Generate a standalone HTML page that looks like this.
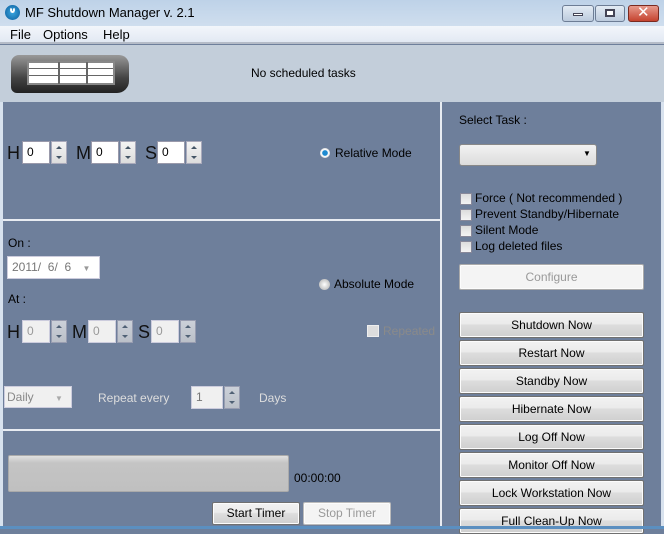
<!DOCTYPE html>
<html><head><style>
*{margin:0;padding:0;box-sizing:border-box}
body{width:664px;height:529px;overflow:hidden;font-family:"Liberation Sans","DejaVu Sans",sans-serif;font-size:12px;background:#6e7f9b;position:relative}
.a{position:absolute}
.t{position:absolute;white-space:nowrap}
.btn{position:absolute;left:459px;width:185px;height:26px;border:1px solid #707070;border-radius:2px;background:linear-gradient(#f2f2f2,#ebebeb 45%,#dddddd 50%,#cfcfcf);box-shadow:inset 0 0 0 1px #fcfcfc;text-align:center;line-height:24px;font-size:12px;color:#000}
.box{position:absolute;background:#fff;border:1px solid #aab;height:23px;font-size:12px;padding:3px 0 0 4px}
.dis{background:#f0f0f0;color:#999;border-color:#ccd}
.spin{position:absolute;width:16px;height:23px;border:1px solid #aab;background:linear-gradient(#f4f4f4,#dcdcdc)}
.spin:before{content:"";position:absolute;left:4px;top:4px;border:3px solid transparent;border-bottom:3px solid #456;border-top:0}
.spin:after{content:"";position:absolute;left:4px;bottom:4px;border:3px solid transparent;border-top:3px solid #456;border-bottom:0}
.big{font-size:18px;color:#111}
.cb{position:absolute;width:12px;height:12px;border:1px solid #889;background:linear-gradient(#ddd,#f4f4f4)}
</style></head><body>
<div class="a" style="left:0;top:0;width:664px;height:26px;background:linear-gradient(#bed2e8,#cfdeee)"></div>
<div class="a" style="left:5px;top:5px;width:15px;height:15px;border-radius:50%;background:radial-gradient(#39a7e0,#0b5c9c);"></div>
<div class="a" style="left:10px;top:7px;width:5px;height:6px;border:2px solid #fff;border-top-color:transparent;border-radius:50%"></div>
<div class="t" style="left:25px;top:5px;font-size:13px;color:#000">MF Shutdown Manager v. 2.1</div>
<div class="a" style="left:562px;top:5px;width:32px;height:17px;border:1px solid #6d7d95;border-radius:3px;background:linear-gradient(#e3ebf4,#bccbdd)"></div>
<div class="a" style="left:573px;top:13px;width:10px;height:3px;background:#fff;border:1px solid #445"></div>
<div class="a" style="left:595px;top:5px;width:30px;height:17px;border:1px solid #6d7d95;border-radius:3px;background:linear-gradient(#e3ebf4,#bccbdd)"></div>
<div class="a" style="left:605px;top:9px;width:10px;height:8px;border:2px solid #445;background:#fff"></div>
<div class="a" style="left:628px;top:5px;width:31px;height:17px;border:1px solid #7a2a20;border-radius:3px;background:linear-gradient(#e79a8c,#c5432f)"></div>
<div class="t" style="left:637px;top:3px;font-size:15px;font-weight:bold;color:#fff">✕</div>
<div class="a" style="left:0;top:26px;width:664px;height:18px;background:linear-gradient(#f3f6fb,#e2e9f3);border-bottom:2px solid #b5bcc8"></div>
<div class="t" style="left:10px;top:27px;font-size:13px">File</div>
<div class="t" style="left:43px;top:27px;font-size:13px">Options</div>
<div class="t" style="left:103px;top:27px;font-size:13px">Help</div>
<div class="a" style="left:0;top:45px;width:664px;height:57px;background:#c3ceda"></div>
<div class="a" style="left:11px;top:55px;width:118px;height:38px;border-radius:8px 10px 12px 6px;background:linear-gradient(#999,#444 60%,#222);"></div>
<div class="a" style="left:27px;top:61px;width:88px;height:24px;background:#fff;border:2px solid #888"></div>
<div class="a" style="left:29px;top:68px;width:84px;height:1px;background:#666"></div>
<div class="a" style="left:29px;top:75px;width:84px;height:1px;background:#666"></div>
<div class="a" style="left:58px;top:62px;width:2px;height:22px;background:#666"></div>
<div class="a" style="left:86px;top:62px;width:2px;height:22px;background:#666"></div>
<div class="t" style="left:251px;top:66px;font-size:12px">No scheduled tasks</div>
<div class="a" style="left:0;top:102px;width:3px;height:427px;background:#d8e2ee"></div>
<div class="a" style="left:661px;top:102px;width:3px;height:427px;background:#d8e2ee"></div>
<div class="a" style="left:0;top:526px;width:664px;height:3px;background:#5b8fc0"></div>
<div class="a" style="left:440px;top:102px;width:2px;height:425px;background:#e8ecf2"></div>
<div class="a" style="left:3px;top:219px;width:437px;height:2px;background:#e8ecf2"></div>
<div class="a" style="left:3px;top:429px;width:437px;height:2px;background:#e8ecf2"></div>
<!-- relative -->
<div class="t big" style="left:7px;top:143px">H</div>
<div class="box" style="left:22px;top:141px;width:28px;border-color:#99a">0</div><div class="spin" style="left:51px;top:141px"></div>
<div class="t big" style="left:76px;top:143px">M</div>
<div class="box" style="left:91px;top:141px;width:28px;border-color:#99a">0</div><div class="spin" style="left:120px;top:141px"></div>
<div class="t big" style="left:145px;top:143px">S</div>
<div class="box" style="left:157px;top:141px;width:28px;border-color:#99a">0</div><div class="spin" style="left:186px;top:141px"></div>
<div class="a" style="left:320px;top:148px;width:10px;height:10px;border-radius:50%;background:radial-gradient(#1e8ad0 35%,#fff 45%,#bbb)"></div>
<div class="t" style="left:335px;top:146px">Relative Mode</div>
<!-- absolute -->
<div class="t" style="left:8px;top:236px">On :</div>
<div class="box dis" style="left:7px;top:256px;width:93px;background:#fff;color:#777">2011/&nbsp; 6/&nbsp; 6 <span style="font-size:8px;margin-left:8px;color:#999">▼</span></div>
<div class="a" style="left:319px;top:279px;width:11px;height:11px;border-radius:50%;background:radial-gradient(#fff,#aaa)"></div>
<div class="t" style="left:334px;top:277px">Absolute Mode</div>
<div class="t" style="left:8px;top:292px">At :</div>
<div class="t big" style="left:7px;top:322px">H</div>
<div class="box dis" style="left:22px;top:320px;width:28px">0</div><div class="spin" style="left:51px;top:320px;opacity:.7"></div>
<div class="t big" style="left:72px;top:322px">M</div>
<div class="box dis" style="left:88px;top:320px;width:28px">0</div><div class="spin" style="left:117px;top:320px;opacity:.7"></div>
<div class="t big" style="left:138px;top:322px">S</div>
<div class="box dis" style="left:151px;top:320px;width:28px">0</div><div class="spin" style="left:180px;top:320px;opacity:.7"></div>
<div class="cb" style="left:367px;top:325px;background:#ddd;border-color:#eee"></div>
<div class="t" style="left:383px;top:324px;color:#8a8a8a">Repeated</div>
<div class="box dis" style="left:4px;top:386px;width:68px;height:22px;padding-left:2px;color:#888">Daily <span style="font-size:8px;margin-left:18px;color:#aaa">▼</span></div>
<div class="t" style="left:98px;top:391px;color:#ddd">Repeat every</div>
<div class="box dis" style="left:191px;top:386px;width:32px;color:#777">1</div><div class="spin" style="left:224px;top:386px;opacity:.7"></div>
<div class="t" style="left:259px;top:391px;color:#ddd">Days</div>
<!-- timer -->
<div class="a" style="left:8px;top:455px;width:281px;height:37px;background:linear-gradient(#e0e0e0,#c4c4c4 20%,#c0c0c0);border:1px solid #aaa;border-radius:2px"></div>
<div class="t" style="left:294px;top:471px">00:00:00</div>
<div class="btn" style="left:212px;top:502px;width:88px;height:23px;line-height:21px">Start Timer</div>
<div class="btn" style="left:303px;top:502px;width:88px;height:23px;line-height:21px;color:#999;border-color:#bbb;background:#f4f4f4">Stop Timer</div>
<!-- right -->
<div class="t" style="left:459px;top:113px">Select Task :</div>
<div class="a" style="left:459px;top:144px;width:138px;height:22px;border:1px solid #888;border-radius:3px;background:linear-gradient(#f2f2f2,#dcdcdc)"></div>
<div class="t" style="left:583px;top:149px;font-size:8px">▼</div>
<div class="cb" style="left:460px;top:193px"></div><div class="t" style="left:475px;top:191px">Force ( Not recommended )</div>
<div class="cb" style="left:460px;top:209px"></div><div class="t" style="left:475px;top:207px">Prevent Standby/Hibernate</div>
<div class="cb" style="left:460px;top:225px"></div><div class="t" style="left:475px;top:223px">Silent Mode</div>
<div class="cb" style="left:460px;top:241px"></div><div class="t" style="left:475px;top:239px">Log deleted files</div>
<div class="btn" style="top:264px;color:#999;border-color:#aaa;background:#f4f4f4">Configure</div>
<div class="btn" style="top:312px">Shutdown Now</div>
<div class="btn" style="top:340px">Restart Now</div>
<div class="btn" style="top:368px">Standby Now</div>
<div class="btn" style="top:396px">Hibernate Now</div>
<div class="btn" style="top:424px">Log Off Now</div>
<div class="btn" style="top:452px">Monitor Off Now</div>
<div class="btn" style="top:480px">Lock Workstation Now</div>
<div class="btn" style="top:508px">Full Clean-Up Now</div>
<div class="a" style="left:0;top:526px;width:664px;height:3px;background:#5b8fc0"></div>
</body></html>
